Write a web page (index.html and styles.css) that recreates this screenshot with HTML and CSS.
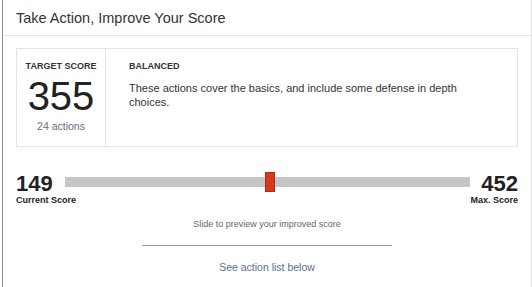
FILE: index.html
```html
<!DOCTYPE html>
<html lang="en">

    <head>
        <meta charset="UTF-8">
        <meta name="viewport" content="width=device-width, initial-scale=1.0">
        <link rel="stylesheet" href="styles.css">
        <title>Take Action, Improve Your Score</title>
    </head>

    <body>
        <div class="panel">
            <div class="panel-header">Take Action, Improve Your Score</div>
            <div class="panel-body">
                <div class="target-box">
                    <div class="target-score">
                        <div class="label">Target Score</div>
                        <div class="big-score">355</div>
                        <div class="actions-count">24 actions</div>
                    </div>
                    <div class="target-info">
                        <div class="label">Balanced</div>
                        <p class="description">These actions cover the basics, and include some defense in depth choices.</p>
                    </div>
                </div>

                <div class="slider-row">
                    <div class="score-num">149</div>
                    <div class="slider-track">
                        <div class="slider-thumb"></div>
                    </div>
                    <div class="score-num">452</div>
                </div>
                <div class="slider-labels">
                    <span>Current Score</span>
                    <span>Max. Score</span>
                </div>

                <div class="hint">Slide to preview your improved score</div>
                <div class="separator"></div>
                <div class="see-list">See action list below</div>
            </div>
        </div>
    </body>
</html>
```

FILE: styles.css
```css
body {
    margin: 0;
    font-family: "Liberation Sans", Arial, sans-serif;
    background-color: #fff;
    color: #333;
}

.panel {
    margin-left: 2px;
    height: 287px;
    border-left: 1px solid #8c8c8c;
    border-right: 1px solid #e0e0e0;
    box-sizing: border-box;
}

.panel-header {
    padding: 8px 13px 7px;
    font-size: 14.5px;
    line-height: 20px;
    border-bottom: 1px solid #e6e6e6;
}

.panel-body {
    padding: 12px 13px 0;
}

.target-box {
    display: flex;
    height: 99px;
    box-sizing: border-box;
    border: 1px solid #e4e4e4;
}

.label {
    font-size: 9px;
    line-height: 11px;
    font-weight: bold;
    text-transform: uppercase;
    color: #333;
}

.target-score {
    width: 88px;
    padding-top: 12px;
    border-right: 1px solid #e4e4e4;
    text-align: center;
}

.big-score {
    margin-top: 4px;
    font-size: 40px;
    line-height: 40px;
    color: #222;
}

.actions-count {
    margin-top: 4px;
    font-size: 10.5px;
    line-height: 13px;
    color: #5f6f82;
}

.target-info {
    flex: 1;
    padding: 12px 30px 0 23px;
}

.description {
    margin: 9px 0 0;
    font-size: 11px;
    line-height: 14px;
}

.slider-row {
    display: flex;
    margin-top: 26px;
}

.score-num {
    font-size: 22px;
    line-height: 22px;
    font-weight: bold;
    color: #222;
}

.slider-track {
    position: relative;
    flex: 1;
    height: 10px;
    margin: 4px 11px 0 12px;
    background-color: #c6c6c6;
}

.slider-thumb {
    position: absolute;
    left: 200px;
    top: -5px;
    width: 8px;
    height: 18px;
    background-color: #d33a1d;
    border: 1px solid #ad2b14;
}

.slider-labels {
    display: flex;
    justify-content: space-between;
    font-size: 9px;
    line-height: 11px;
    font-weight: bold;
    color: #222;
}

.hint {
    margin-top: 13px;
    text-align: center;
    font-size: 9px;
    line-height: 11px;
    color: #666;
}

.separator {
    width: 250px;
    margin: 15px auto 0;
    border-top: 1px solid #9a9a9a;
}

.see-list {
    margin-top: 15px;
    text-align: center;
    font-size: 10.5px;
    line-height: 13px;
    color: #5b6f88;
}
```
